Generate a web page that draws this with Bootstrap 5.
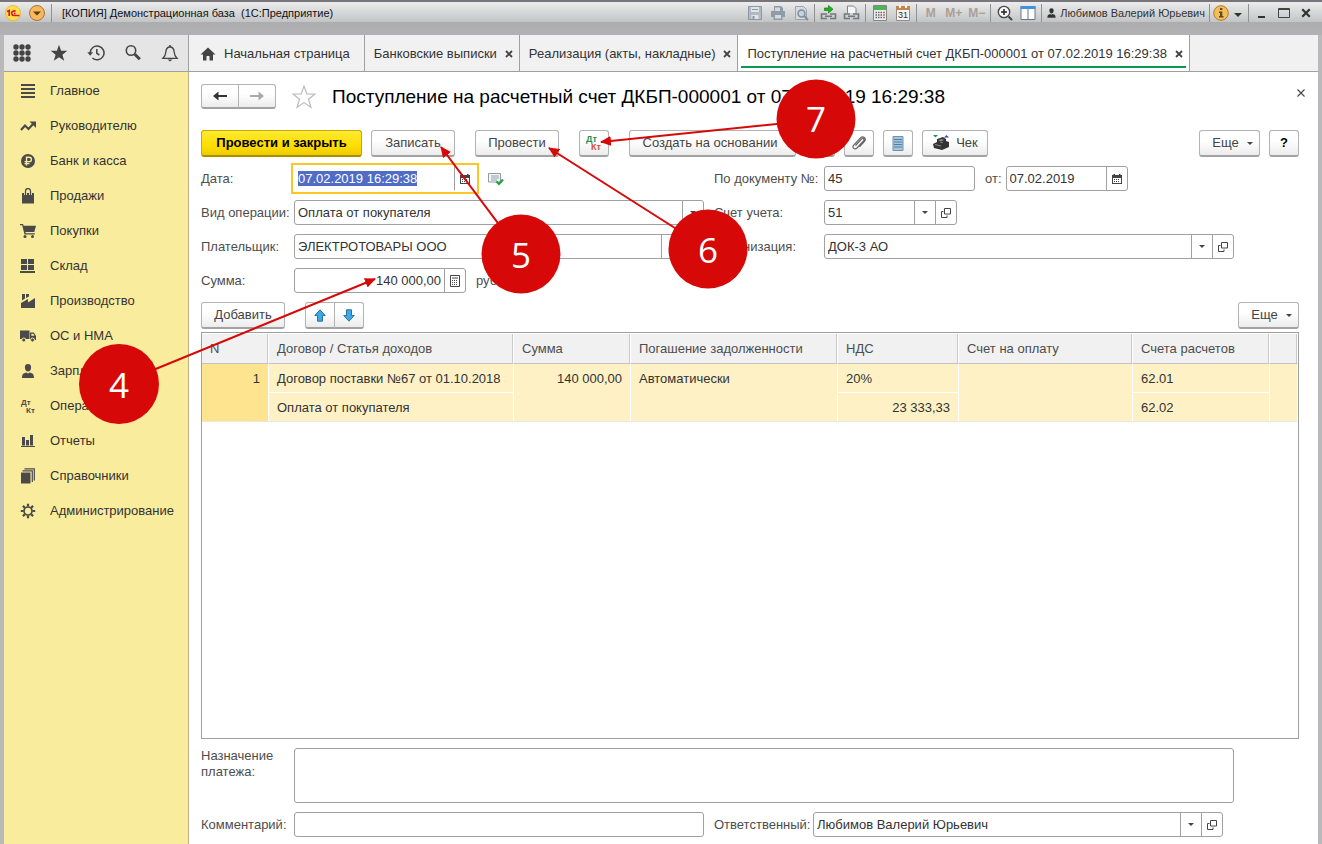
<!DOCTYPE html>
<html lang="ru">
<head>
<meta charset="utf-8">
<meta name="viewport" content="width=device-width, initial-scale=1">
<title>Поступление на расчетный счет</title>
<link href="https://cdn.jsdelivr.net/npm/bootstrap@5.3.0/dist/css/bootstrap.min.css" rel="stylesheet">
<style>
body{font-family:"Liberation Sans",Arial,sans-serif;font-size:13px;line-height:16px;color:#333;background:#b4b4b6}
svg{display:block;flex:none}
a{color:inherit;text-decoration:none}
.win{border:solid #b9b9bb;border-width:0 4px}
/* title bar */
.titlebar{height:35px;margin:0 -4px;padding:1px 5px 0;border-top:2px solid #77757a;background:linear-gradient(#ececec,#c3c4c6 20px,#acadaf 20px,#b2b2b4);font-size:11px;color:#111}
.titlebar>*{height:20px}
.tb{width:23px;height:20px;padding:0;border:0;border-radius:0;font-size:11px;line-height:16px;color:#333;display:flex;align-items:center;justify-content:center}
.tb.mem{font-size:12px;font-weight:700;color:#ab9f96}
.tb.round{width:16px}
.tb.info{width:18px}
.tb.user{width:auto;padding:0 2px;gap:3px}
.tb.wn{width:22px}
.titlebar .vsep{width:1px;margin:1px 2px 0;height:18px;background:#909093}
/* tab strip */
.strip{height:37px;background:#f1f1f1;border-bottom:1px solid #a0a0a0}
.tools{width:185px;background:#e5e5e5;border-right:1px solid #a0a0a0;color:#444}
.tools .tb{width:37px;height:36px;color:#444}
.tabx{position:relative;height:36px;border-right:1px solid #a0a0a0;padding:1px 6px 0 9px;gap:8px}
.tabx.first{padding:1px 14px 0 11px;gap:8px}
.tabx.active{background:#fff}
.tabx.active::after{content:"";position:absolute;left:3px;right:3px;bottom:3px;height:2px;background:#0a9a4e}
.cls{border:0;background:none;padding:0;color:#444}
.fav{margin:0 16px}
.shut{margin:0 -6px 8px 0}
/* sections */
.side{width:185px;padding-top:1px;background:#faec9d;border-right:1px solid #b9b288}
.side .nav-link{height:35px;padding:0 0 0 16px;gap:14px;color:#333;display:flex;align-items:center}
.side svg{color:#4a4a4a}
/* form */
.main{padding:12px 19px 7px 12px}
.btn1{height:27px;padding:0;font-size:13px;line-height:16px;color:#444;border:1px solid #b3b3b3;border-bottom:2px solid #a2a2a2;border-radius:3px;background:linear-gradient(#fff 40%,#ececec);display:inline-flex;align-items:center;justify-content:center;white-space:nowrap}
.btn1.ico{width:30px}
.btn1.act{width:84px}
.btn1.more{width:61px;padding-left:6px}
.btn1.based{width:167px;padding-left:9px}
.btn1.check{width:66px;gap:6px}
.btn1.prime{width:161px;font-weight:700;color:#000;border-color:#c5a900;border-bottom-color:#a89000;background:linear-gradient(#ffe933,#ffde00 60%,#efcb00)}
.btn1.low{height:25px;width:38px}
.flip{transform:rotate(180deg)}
.cmds{margin-top:21px}
.g9{margin-right:9px}.g20{margin-right:20px}
.dd::after{content:"";border:3px solid transparent;border-top-color:#444;border-bottom:0;margin-left:8px}
h1{font-size:19px;line-height:24px;font-weight:400;color:#000}
.lab{color:#4d4d4d;white-space:nowrap}
.fgrid{display:grid;grid-template-columns:93px minmax(0,1fr) 120px minmax(0,1fr);row-gap:9px;align-items:center;padding-right:65px;margin-top:9px}
.fgrid .r,.foot .r{padding-left:10px}
.foot{display:grid;grid-template-columns:93px minmax(0,1fr) 109px minmax(0,1fr);align-items:center;padding-right:76px}
.form-control{min-height:0;height:25px;padding:0 3px;font-size:13px;line-height:16px;color:#333;border:1px solid #a0a0a0;border-radius:3px}
.form-control:focus{box-shadow:none;color:#333;border-color:#a0a0a0}
.input-group{flex-wrap:nowrap}
.input-group .btn{width:22px;height:25px;padding:0;border:1px solid #a0a0a0;border-radius:3px;background:#fff;color:#444;display:flex;align-items:center;justify-content:center}
.w-date{width:182px}.w-sum{width:172px}.w-num{width:151px}.w-short{width:122px}.w-acc{width:133px}
.hot{outline:2px solid #fcc724;outline-offset:1px}
.hot .form-control,.hot .form-control:focus,.hot .btn{border-color:#fff}
.hot .btn{border-left-color:#a0a0a0;z-index:6}
.hot ::selection{background:#4f6cc6;color:#fff}
.note-row{margin:9px 65px 9px 0}
.note-row .lab{width:93px}
.purpose{height:55px;resize:none}
/* table */
.rows{margin:9px 0 3px}
.box{border:1px solid #a0a0a0;min-height:200px}
.box table{width:100%;table-layout:fixed;border-collapse:separate;border-spacing:0}
.box th{height:31px;padding:0 8px;font-weight:400;color:#4d4d4d;background:#f1f1f1;border:1px solid #fff;border-left:0;border-bottom:1px solid #c4c4c4;box-shadow:inset -1px 0 #c9c9c9}
.box td{height:29px;padding:1px 8px 0;background:#fef1c6;border-right:1px solid #fff;vertical-align:middle}
.box td[rowspan]{vertical-align:top;padding-top:7px}
.box td.up{border-bottom:1px solid #fff}
.box td.num{background:#fee48f}
.box tbody tr:last-child td,.box td[rowspan]{border-bottom:1px solid #e6e6e6}
/* callouts */
.notes{position:absolute;left:0;top:0;z-index:10;pointer-events:none;font-family:"Open Sans","Noto Sans",sans-serif;font-size:35px}
</style>
</head>
<body>
<svg width="0" height="0" class="position-absolute" aria-hidden="true">
 <defs>
  <symbol id="dots" viewBox="0 0 18 18"><g fill="currentColor"><circle cx="3" cy="3" r="2.7"/><circle cx="9" cy="3" r="2.7"/><circle cx="15" cy="3" r="2.7"/><circle cx="3" cy="9" r="2.7"/><circle cx="9" cy="9" r="2.7"/><circle cx="15" cy="9" r="2.7"/><circle cx="3" cy="15" r="2.7"/><circle cx="9" cy="15" r="2.7"/><circle cx="15" cy="15" r="2.7"/></g></symbol>
  <symbol id="star" viewBox="0 0 18 18"><path fill="currentColor" d="M9 .8l2.100 5.900 6.200.1-4.900 3.900 1.800 6L9 13.200l-5.200 3.500 1.800-6L.7 6.800l6.200-.1z"/></symbol>
  <symbol id="hist" viewBox="0 0 18 18"><path fill="none" stroke="currentColor" stroke-width="1.500" d="M3.200 9a6.900 6.900 0 1 1 2.200 5M9.800 5v4.300l2.600 1.700"/><path fill="currentColor" d="M.3 8.200h5.800L3.200 11.800z"/></symbol>
  <symbol id="find" viewBox="0 0 18 18"><circle cx="7" cy="6.500" r="4.700" fill="none" stroke="currentColor" stroke-width="1.600"/><path stroke="currentColor" stroke-width="3" d="M10.800 10.300l5 5"/></symbol>
  <symbol id="bell" viewBox="0 0 18 18"><path fill="none" stroke="currentColor" stroke-width="1.300" d="M2 14.300h14c-2-2-2.600-3-2.800-6C13 4.800 11.800 3 9 3S5 4.800 4.800 8.300c-.2 3-.8 4-2.800 6z"/><path fill="currentColor" d="M8.200 1h1.600v2H8.200zM6.500 15.500h5L9 17.500z"/></symbol>
  <symbol id="home" viewBox="0 0 16 14"><path fill="currentColor" d="M8 .5L15.500 7.500H13V13.500H9.500V9h-3v4.500H3V7.500H.5z"/></symbol>
  <symbol id="x" viewBox="0 0 8 8"><path stroke="currentColor" stroke-width="1.800" d="M1 1l6 6M7 1L1 7"/></symbol>
  <symbol id="xthin" viewBox="0 0 8 8"><path stroke="currentColor" stroke-width="1.100" d="M.5.5l7 7M7.500.5l-7 7"/></symbol>
  <symbol id="menu" viewBox="0 0 16 16"><path fill="currentColor" d="M1 1h14v2H1zM1 5h14v2H1zM1 9h14v2H1zM1 13h14v2H1z"/></symbol>
  <symbol id="trend" viewBox="0 0 16 16"><path fill="none" stroke="currentColor" stroke-width="2.200" d="M1 12l4-4.500L8.500 11l5-5.500"/><path fill="currentColor" d="M9.500 3.500H16V10z"/></symbol>
  <symbol id="rub" viewBox="0 0 16 16"><circle cx="8" cy="8" r="7" fill="currentColor"/><path fill="none" stroke="#faec9d" stroke-width="1.400" d="M6.500 12.500V4.200h2.700a2.200 2.200 0 0 1 0 4.400H4.500M4.500 10.600h5"/></symbol>
  <symbol id="bag" viewBox="0 0 16 16"><path fill="currentColor" d="M2 5h12v10.500H2z"/><path fill="none" stroke="#faec9d" stroke-width="3" d="M5.500 7V3.500a2.500 2.500 0 0 1 5 0V7"/><path fill="none" stroke="currentColor" stroke-width="1.300" d="M5.500 7.500V3a2.500 2.500 0 0 1 5 0v4.500"/></symbol>
  <symbol id="cart" viewBox="0 0 16 16"><path fill="currentColor" d="M0 1h3l.6 1.800H16L14.300 9H5.400l.3 1.300h9.100v1.200H4.500L2.200 2.300H0z"/><circle cx="5" cy="13.500" r="1.500" fill="currentColor"/><circle cx="12.500" cy="13.500" r="1.500" fill="currentColor"/></symbol>
  <symbol id="store" viewBox="0 0 16 16"><path fill="currentColor" d="M1 1h6v5H1zM8 1h6v5H8zM1 7h6v5H1zM8 7h6v5H8zM0 13h15v2H0z"/></symbol>
  <symbol id="plant" viewBox="0 0 16 16"><path fill="currentColor" d="M1 15V10l7-4v3.500L15 5v10zM2 1h3v4.500L2 7.500zM6 1h3v2.500L6 5z"/></symbol>
  <symbol id="truck" viewBox="0 0 16 16"><path fill="currentColor" d="M0 2.500h9.500v8.500H0zM10 4.500h3.800L16 8v4h-6z"/><path fill="#faec9d" d="M11.300 5.700h2l1.200 2h-3.200z"/><g fill="currentColor" stroke="#faec9d"><circle cx="3.800" cy="12" r="2"/><circle cx="12.500" cy="12" r="2"/></g></symbol>
  <symbol id="man" viewBox="0 0 16 16"><path fill="currentColor" d="M8 1c2.300 0 3.300 1.600 3.100 3.800C10.900 7 9.800 8.600 8 8.600S5.100 7 4.900 4.800C4.700 2.600 5.700 1 8 1zM2 15c0-3.700 1.300-4.800 4.300-5.500L8 10.600l1.700-1.100C12.700 10.200 14 11.300 14 15z"/></symbol>
  <symbol id="bars" viewBox="0 0 16 16"><path fill="currentColor" d="M2 4h3v8.500H2zM6 7h3v5.500H6zM10 2h3v10.500h-3zM1 13h14v1H1z"/></symbol>
  <symbol id="books" viewBox="0 0 16 16"><path fill="currentColor" d="M1 4.500h9.500v11H1z"/><path fill="none" stroke="currentColor" stroke-width="1.200" d="M2.500 2.800h9.800V14M4.500.8h9.800V12.500"/></symbol>
  <symbol id="gear" viewBox="0 0 16 16"><circle cx="8" cy="8" r="4" fill="none" stroke="currentColor" stroke-width="1.700"/><path stroke="currentColor" stroke-width="2.200" d="M8 .8v2.700M8 12.500v2.700M.8 8h2.700M12.500 8h2.700M2.900 2.900l1.900 1.900M11.200 11.200l1.900 1.900M2.900 13.100l1.900-1.900M11.200 4.800l1.900-1.900"/></symbol>
  <symbol id="cal" viewBox="0 0 10 10"><path fill="currentColor" d="M0 1h1.500V0h1.500v1h4V0h1.500v1H10v9H0zM1 4v5h8V4z" fill-rule="evenodd"/><path stroke="currentColor" stroke-dasharray="1 1" d="M2 5.500h6M2 7.500h6"/></symbol>
  <symbol id="calc" viewBox="0 0 10 12"><path fill="none" stroke="currentColor" d="M.5.5h9v11h-9zM2 3h6"/><path stroke="currentColor" stroke-dasharray="1 1" d="M2 5.500h6M2 7.500h6M2 9.500h6"/></symbol>
  <symbol id="open" viewBox="0 0 10 10"><path fill="none" stroke="currentColor" d="M3.500.5h6v5.500h-6zM2.500 3.500h-2v6h5.500v-2"/></symbol>
  <symbol id="tri" viewBox="0 0 6 3"><path fill="currentColor" d="M0 0h6L3 3z"/></symbol>
  <symbol id="arr" viewBox="0 0 14 10"><path fill="currentColor" d="M0 5L5.500.5V4H14v2H5.500v3.500z"/></symbol>
  <symbol id="fat" viewBox="0 0 12 13"><path fill="#3ea9e8" stroke="#2a73a3" d="M6 .8l5.200 5.700H8.500v5.700h-5V6.500H.8z"/></symbol>
 </defs>
</svg>

<div class="win d-flex flex-column min-vh-100">
 <header class="titlebar d-flex">
  <button class="tb btn round" aria-label="1С"><svg width="16" height="16" viewBox="0 0 16 16"><circle cx="8" cy="8" r="7.500" fill="#ffdf4f" stroke="#e3bd3c"/><path fill="none" stroke="#d81920" stroke-width="1.700" d="M2 6.500L4.200 5.500V11M10.500 6.500a2.300 2.300 0 1 0-1.500 4h5.500M10.500 8.500h-1.500"/></svg></button>
  <button class="tb btn round ms-2 me-1" aria-label="Меню"><svg width="16" height="16" viewBox="0 0 16 16"><circle cx="8" cy="8" r="7.500" fill="#f8b95c" stroke="#a87534"/><path fill="#5d3c15" d="M4 6.500h8L8 10.500z"/></svg></button>
  <span class="vsep"></span>
  <span class="ps-2 me-auto d-flex align-items-center text-nowrap">[КОПИЯ] Демонстрационная база&nbsp; (1С:Предприятие)</span>
  <button class="tb btn" aria-label="Сохранить"><svg width="16" height="16" viewBox="0 0 16 16"><path fill="#b0bac3" stroke="#8c98a5" d="M1.500 1.500h13v13h-13z"/><path fill="#dfe4e8" d="M4 2h8v5H4zM4.500 10h7v4h-7z"/><path fill="#8c98a5" d="M5.500 11h2v3h-2zM5 4h6v1H5z"/></svg></button>
  <button class="tb btn" aria-label="Печать"><svg width="16" height="16" viewBox="0 0 16 16"><path fill="#8f9ba6" d="M4 1h7l2 2v3H4zM1 6h14v6h-2.500v3h-9v-3H1z"/><path fill="#d5dade" d="M5 2.500h5V6H5zM5 10h6v3.500H5z"/></svg></button>
  <button class="tb btn" aria-label="Просмотр"><svg width="16" height="16" viewBox="0 0 16 16"><path fill="#d5dade" stroke="#9aa5af" d="M2.500 1.500h8l3 3v10h-11z"/><circle cx="8.500" cy="8.500" r="3.500" fill="#c4d2dc" stroke="#7f8e9b" stroke-width="1.500"/><path stroke="#7f8e9b" stroke-width="2" d="M11 11l4 4"/></svg></button>
  <span class="vsep"></span>
  <button class="tb btn" aria-label="Получить ссылку"><svg width="17" height="16" viewBox="0 0 17 16"><path fill="none" stroke="#6f7781" stroke-width="1.600" d="M7 9H1.500v4.500H7M10 9h5.500v4.500H10M5 11.200h7"/><path fill="#20b020" stroke="#128012" stroke-width=".7" d="M4.500 3h4V.5L13 4.200 8.500 8V5.500h-4z"/></svg></button>
  <button class="tb btn" aria-label="Перейти по ссылке"><svg width="17" height="16" viewBox="0 0 17 16"><path fill="#f4f5f6" stroke="#7b838b" d="M4.500 8V1h6l2.500 2.500V8"/><path fill="none" stroke="#6f7781" stroke-width="1.600" d="M7 9H1.500v4.500H7M10 9h5.500v4.500H10M5 11.200h7"/></svg></button>
  <span class="vsep"></span>
  <button class="tb btn" aria-label="Калькулятор"><svg width="14" height="16" viewBox="0 0 14 16"><path fill="#eee" stroke="#7d8a7d" d="M.5.5h13v15H.5z"/><path fill="#4fb255" d="M1 1h12v4H1z"/><path stroke="#666" stroke-width="1.300" stroke-dasharray="1.500 1" d="M2.500 7.500h7M2.500 10h7M2.500 12.500h7"/><path stroke="#c33" stroke-width="1.500" stroke-dasharray="1.500 1" d="M11 6.800v7"/></svg></button>
  <button class="tb btn" aria-label="Календарь"><svg width="14" height="16" viewBox="0 0 14 16"><path fill="#f5f5f5" stroke="#8d8d8d" d="M.5 1.500h13v14H.5z"/><path fill="#c98549" d="M0 1h14v4H0z"/><path fill="#fff" d="M3 0h2v3H3zM9 0h2v3H9z"/><text x="7" y="13" font-size="9" text-anchor="middle" fill="#333">31</text></svg></button>
  <span class="vsep"></span>
  <button class="tb mem btn">M</button><button class="tb mem btn">M+</button><button class="tb mem btn">M−</button>
  <span class="vsep"></span>
  <button class="tb btn" aria-label="Масштаб"><svg width="16" height="16" viewBox="0 0 16 16"><circle cx="7" cy="7" r="5.700" fill="#f6f6f6" stroke="#444" stroke-width="1.300"/><path stroke="#222" stroke-width="1.500" d="M4 7h6M7 4v6"/><path stroke="#444" stroke-width="2" d="M11.500 11.500l3.500 3.500"/></svg></button>
  <button class="tb btn" aria-label="Панели"><svg width="16" height="16" viewBox="0 0 16 16"><path fill="#fff" stroke="#61798d" d="M1 1.500h14v13H1zM8 4v10"/><path fill="#3e93de" d="M.5 1h15v3H.5z"/></svg></button>
  <span class="vsep"></span>
  <button class="tb btn user text-nowrap"><svg width="11" height="12"><use href="#man"/></svg>Любимов Валерий Юрьевич</button>
  <span class="vsep"></span>
  <button class="tb btn info" aria-label="Справка"><svg width="16" height="16" viewBox="0 0 16 16"><circle cx="8" cy="8" r="7.300" fill="#f5bd55" stroke="#b07d2d"/><path fill="#5b4a33" d="M7 3h2.300v2H7zM6 6.500h3.300V11h1.200v1.500H6V11h1V8H6z"/></svg></button>
  <button class="tb btn round" aria-label="Еще"><svg class="mt-1" width="8" height="4"><use href="#tri"/></svg></button>
  <span class="vsep"></span>
  <button class="tb btn wn" aria-label="Свернуть"><svg width="8" height="10" viewBox="0 0 8 10"><path fill="#333" d="M0 8h7v2H0z"/></svg></button>
  <button class="tb btn wn" aria-label="Развернуть"><svg width="12" height="10" viewBox="0 0 12 10"><path fill="none" stroke="#444" d="M.5.500h11v9H.5z"/><path stroke="#444" d="M0 1.500h12"/></svg></button>
  <button class="tb btn wn" aria-label="Закрыть"><svg width="10" height="10"><use href="#x"/></svg></button>
 </header>

 <nav class="strip d-flex">
  <div class="tools d-flex flex-shrink-0">
   <button class="tb btn" aria-label="Меню функций"><svg width="18" height="18"><use href="#dots"/></svg></button>
   <button class="tb btn" aria-label="Избранное"><svg width="18" height="18"><use href="#star"/></svg></button>
   <button class="tb btn" aria-label="История"><svg width="18" height="18"><use href="#hist"/></svg></button>
   <button class="tb btn" aria-label="Поиск"><svg width="18" height="18"><use href="#find"/></svg></button>
   <button class="tb btn" aria-label="Оповещения"><svg width="18" height="18"><use href="#bell"/></svg></button>
  </div>
  <div class="tabx first d-flex align-items-center text-nowrap"><svg width="16" height="14" color="#444"><use href="#home"/></svg><a href="#">Начальная страница</a></div>
  <div class="tabx d-flex align-items-center text-nowrap"><a href="#">Банковские выписки</a><button class="cls" aria-label="Закрыть"><svg width="8" height="8"><use href="#x"/></svg></button></div>
  <div class="tabx d-flex align-items-center text-nowrap"><a href="#">Реализация (акты, накладные)</a><button class="cls" aria-label="Закрыть"><svg width="8" height="8"><use href="#x"/></svg></button></div>
  <div class="tabx active d-flex align-items-center text-nowrap"><a href="#">Поступление на расчетный счет ДКБП-000001 от 07.02.2019 16:29:38</a><button class="cls" aria-label="Закрыть"><svg width="8" height="8"><use href="#x"/></svg></button></div>
 </nav>

 <div class="d-flex flex-grow-1">
  <nav class="side nav flex-column flex-nowrap flex-shrink-0">
   <a class="nav-link" href="#"><svg width="16" height="16"><use href="#menu"/></svg>Главное</a>
   <a class="nav-link" href="#"><svg width="16" height="16"><use href="#trend"/></svg>Руководителю</a>
   <a class="nav-link" href="#"><svg width="16" height="16"><use href="#rub"/></svg>Банк и касса</a>
   <a class="nav-link" href="#"><svg width="16" height="16"><use href="#bag"/></svg>Продажи</a>
   <a class="nav-link" href="#"><svg width="16" height="16"><use href="#cart"/></svg>Покупки</a>
   <a class="nav-link" href="#"><svg width="16" height="16"><use href="#store"/></svg>Склад</a>
   <a class="nav-link" href="#"><svg width="16" height="16"><use href="#plant"/></svg>Производство</a>
   <a class="nav-link" href="#"><svg width="16" height="16"><use href="#truck"/></svg>ОС и НМА</a>
   <a class="nav-link" href="#"><svg width="16" height="16"><use href="#man"/></svg>Зарплата</a>
   <a class="nav-link" href="#"><svg width="16" height="16" viewBox="0 0 16 16" font-size="8" font-weight="700" fill="#4a4a4a"><text x="1" y="7">Дт</text><text x="6" y="15">Кт</text></svg>Операции</a>
   <a class="nav-link" href="#"><svg width="16" height="16"><use href="#bars"/></svg>Отчеты</a>
   <a class="nav-link" href="#"><svg width="16" height="16"><use href="#books"/></svg>Справочники</a>
   <a class="nav-link" href="#"><svg width="16" height="16"><use href="#gear"/></svg>Администрирование</a>
  </nav>

  <main class="main bg-white flex-grow-1 d-flex flex-column">
   <div class="d-flex align-items-center">
    <div class="btn-group">
     <button class="btn btn1 low" aria-label="Назад"><svg width="14" height="10" color="#333"><use href="#arr"/></svg></button>
     <button class="btn btn1 low" aria-label="Вперед"><svg class="flip" width="14" height="10" color="#aaa"><use href="#arr"/></svg></button>
    </div>
    <button class="cls fav" aria-label="В избранное"><svg width="24" height="24" viewBox="0 0 18 18"><path fill="none" stroke="#b9bcc2" stroke-width=".9" d="M9 .8l2.100 5.900 6.200.1-4.900 3.900 1.800 6L9 13.200l-5.200 3.500 1.800-6L.7 6.800l6.200-.1z"/></svg></button>
    <h1 class="mb-0 me-auto">Поступление на расчетный счет ДКБП-000001 от 07.02.2019 16:29:38</h1>
    <button class="cls shut" aria-label="Закрыть"><svg width="8" height="8"><use href="#xthin"/></svg></button>
   </div>

   <div class="d-flex cmds">
    <button class="btn btn1 prime g9">Провести и закрыть</button>
    <button class="btn btn1 act g20">Записать</button>
    <button class="btn btn1 act g20">Провести</button>
    <button class="btn btn1 ico g20" aria-label="Проводки"><svg width="18" height="18" viewBox="0 0 18 18" font-size="9" font-weight="700"><text x="1" y="8" fill="#1c9150">Дт</text><text x="6" y="16" fill="#d94a3f">Кт</text></svg></button>
    <button class="btn btn1 based dd g9">Создать на основании</button>
    <button class="btn btn1 ico g9" aria-label="Связи"></button>
    <button class="btn btn1 ico g9" aria-label="Файлы"><svg width="16" height="16" viewBox="0 0 16 16"><path fill="none" stroke="#666" stroke-width="1.200" d="M4.500 10.500l6-6.500c1.500-1.500 3.300.2 2 1.800l-6.500 7.200c-2.200 2.200-5.500-.3-3.300-2.900l6.500-7c3-3 6.500.5 4.300 3.200l-5 5.500"/></svg></button>
    <button class="btn btn1 ico g9" aria-label="Список"><svg width="12" height="15" viewBox="0 0 12 15"><path fill="#a5c6de" stroke="#6f93ae" d="M1 .5h10v14H1z"/><path stroke="#54799a" d="M2 3.500h8M2 6h8M2 8.500h8M2 11h8"/></svg></button>
    <button class="btn btn1 check"><svg width="18" height="18" viewBox="0 0 18 18"><path fill="#1a9a4a" d="M1 1h5L3.500 3.500z"/><path fill="#2c49c0" d="M12 3.500h5L14.500 1z"/><path fill="#333" d="M5 5l6-2 3 2v2l3 1v5l-7 3-8-2-1-4 4-2z"/><path fill="#8b8b8b" d="M6 6l4-1 2 1-3 1.500zM3 10l6 1.500v1L3 11z"/><path fill="#777" d="M8 8h3v1H8z"/></svg>Чек</button>
    <button class="btn btn1 more dd ms-auto g9">Еще</button>
    <button class="btn btn1 ico fw-bold text-black">?</button>
   </div>

   <div class="fgrid">
    <label class="lab" for="f1">Дата:</label>
    <div class="d-flex align-items-center">
     <div class="input-group w-date hot"><input id="f1" class="form-control" value="07.02.2019 16:29:38"><button class="btn" aria-label="Выбрать дату"><svg width="10" height="10"><use href="#cal"/></svg></button></div>
     <svg class="ms-2 ps-1" width="20" height="14" viewBox="0 0 16 14"><path fill="#f4f7f8" stroke="#8f9ca5" d="M.5 1.500h12v8.500H.5z"/><path stroke="#8f9ca5" d="M3 4h8M3 6h8M3 8h6"/><path fill="none" stroke="#20a040" stroke-width="2.200" d="M8.500 9.500l2.500 2.500 4-4.500"/></svg>
    </div>
    <label class="lab r" for="f2">По документу №:</label>
    <div class="d-flex align-items-center">
     <input id="f2" class="form-control w-num flex-shrink-0" value="45">
     <label class="lab r me-1" for="f3">от:</label>
     <div class="input-group w-short"><input id="f3" class="form-control" value="07.02.2019"><button class="btn" aria-label="Выбрать дату"><svg width="10" height="10"><use href="#cal"/></svg></button></div>
    </div>

    <label class="lab" for="f4">Вид операции:</label>
    <div class="input-group"><input id="f4" class="form-control" value="Оплата от покупателя"><button class="btn" aria-label="Выбрать"><svg width="6" height="3"><use href="#tri"/></svg></button></div>
    <label class="lab r" for="f5">Счет учета:</label>
    <div class="input-group w-acc"><input id="f5" class="form-control" value="51"><button class="btn" aria-label="Выбрать"><svg width="6" height="3"><use href="#tri"/></svg></button><button class="btn" aria-label="Открыть"><svg width="10" height="10"><use href="#open"/></svg></button></div>

    <label class="lab" for="f6">Плательщик:</label>
    <div class="input-group"><input id="f6" class="form-control" value="ЭЛЕКТРОТОВАРЫ ООО"><button class="btn" aria-label="Выбрать"><svg width="6" height="3"><use href="#tri"/></svg></button><button class="btn" aria-label="Открыть"><svg width="10" height="10"><use href="#open"/></svg></button></div>
    <label class="lab r" for="f7">Организация:</label>
    <div class="input-group"><input id="f7" class="form-control" value="ДОК-3 АО"><button class="btn" aria-label="Выбрать"><svg width="6" height="3"><use href="#tri"/></svg></button><button class="btn" aria-label="Открыть"><svg width="10" height="10"><use href="#open"/></svg></button></div>

    <label class="lab" for="f8">Сумма:</label>
    <div class="d-flex align-items-center">
     <div class="input-group w-sum"><input id="f8" class="form-control text-end" value="140 000,00"><button class="btn" aria-label="Калькулятор"><svg width="10" height="12"><use href="#calc"/></svg></button></div>
     <span class="lab r">руб.</span>
    </div>
   </div>

   <div class="d-flex rows">
    <button class="btn btn1 act g20">Добавить</button>
    <div class="btn-group">
     <button class="btn btn1 ico" aria-label="Вверх"><svg width="12" height="13"><use href="#fat"/></svg></button>
     <button class="btn btn1 ico" aria-label="Вниз"><svg class="flip" width="12" height="13"><use href="#fat"/></svg></button>
    </div>
    <button class="btn btn1 more dd ms-auto">Еще</button>
   </div>

   <div class="box flex-grow-1">
    <table>
     <colgroup><col style="width:67px"><col><col style="width:117px"><col style="width:207px"><col style="width:121px"><col style="width:174px"><col style="width:137px"><col style="width:28px"></colgroup>
     <thead><tr><th>N</th><th>Договор / Статья доходов</th><th>Сумма</th><th>Погашение задолженности</th><th>НДС</th><th>Счет на оплату</th><th>Счета расчетов</th><th></th></tr></thead>
     <tbody>
      <tr><td rowspan="2" class="num text-end">1</td><td class="up">Договор поставки №67 от 01.10.2018</td><td rowspan="2" class="text-end">140 000,00</td><td rowspan="2">Автоматически</td><td class="up">20%</td><td rowspan="2"></td><td class="up">62.01</td><td rowspan="2"></td></tr>
      <tr><td>Оплата от покупателя</td><td class="text-end">23 333,33</td><td>62.02</td></tr>
     </tbody>
    </table>
   </div>

   <div class="note-row d-flex align-items-start">
    <label class="lab flex-shrink-0" for="f9">Назначение<br>платежа:</label>
    <textarea id="f9" class="form-control purpose"></textarea>
   </div>
   <div class="foot">
    <label class="lab" for="f10">Комментарий:</label>
    <input id="f10" class="form-control">
    <label class="lab r" for="f11">Ответственный:</label>
    <div class="input-group"><input id="f11" class="form-control" value="Любимов Валерий Юрьевич"><button class="btn" aria-label="Выбрать"><svg width="6" height="3"><use href="#tri"/></svg></button><button class="btn" aria-label="Открыть"><svg width="10" height="10"><use href="#open"/></svg></button></div>
   </div>
  </main>
 </div>
</div>

<svg class="notes" width="1322" height="844" viewBox="0 0 1322 844">
 <defs><marker id="tip" markerWidth="11" markerHeight="10" refX="10" refY="5" orient="auto" markerUnits="userSpaceOnUse"><path fill="#d70808" d="M0 0l11 5-11 5z"/></marker></defs>
 <g stroke="#d70808" stroke-width="2">
  <path d="M119 384L375 279" marker-end="url(#tip)"/><path d="M521 254L441 147" marker-end="url(#tip)"/><path d="M708 249L549 148" marker-end="url(#tip)"/><path d="M816 120L601 142" marker-end="url(#tip)"/>
 </g>
 <g fill="#d70808"><circle cx="119" cy="384" r="40"/><circle cx="521" cy="254" r="39.500"/><circle cx="708" cy="249" r="39.500"/><circle cx="816" cy="119" r="39.500"/></g>
 <g fill="#fff" text-anchor="middle"><text x="119" y="398">4</text><text x="521" y="268">5</text><text x="708" y="263">6</text><text x="816" y="132">7</text></g>
</svg>

<script src="https://cdn.jsdelivr.net/npm/bootstrap@5.3.0/dist/js/bootstrap.bundle.min.js"></script>
<script>
const d=document.getElementById('f1');d.focus();d.select();
</script>
</body>
</html>
